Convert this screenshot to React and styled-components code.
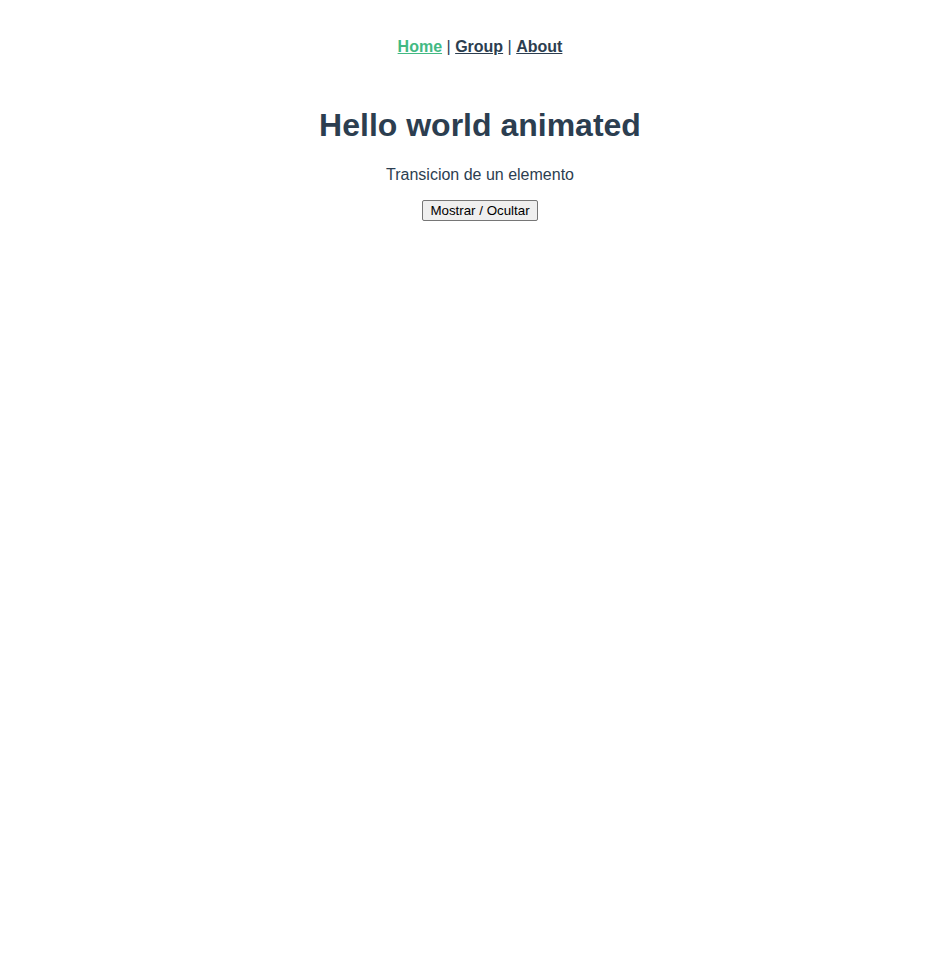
import React from "react";
import styled, { createGlobalStyle } from "styled-components";

const GlobalStyle = createGlobalStyle`
  body {
    margin: 8px;
    background: #fff;
  }
`;

const AppWrap = styled.div`
  width: 944px;
  font-family: "Liberation Sans", Helvetica, Arial, sans-serif;
  -webkit-font-smoothing: antialiased;
  text-align: center;
  color: #2c3e50;
`;

const Nav = styled.div`
  padding: 30px;
  font-size: 16px;
  line-height: normal;
`;

const NavLink = styled.a`
  font-weight: bold;
  color: ${(p) => (p.$active ? "#42b983" : "#2c3e50")};
  text-decoration: underline;
  cursor: pointer;
`;

const Title = styled.h1`
  font-size: 32px;
  margin: 21.44px 0;
`;

const Text = styled.p`
  font-size: 16px;
  margin: 16px 0;
`;

const ToggleButton = styled.button`
  font-family: "Liberation Sans", Arial, sans-serif;
  font-size: 13.33px;
  line-height: 15px;
  color: #000;
  background: #efefef;
  border: 1px solid #767676;
  border-radius: 2px;
  padding: 2px 7px;
  cursor: pointer;
`;

const App = () => {
  const [show, setShow] = React.useState(false);

  return (
    <>
      <GlobalStyle />
      <AppWrap>
        <Nav>
          <NavLink $active href="#/">Home</NavLink> |{" "}
          <NavLink href="#/group">Group</NavLink> |{" "}
          <NavLink href="#/about">About</NavLink>
        </Nav>
        <Title>Hello world animated</Title>
        <Text>Transicion de un elemento</Text>
        <ToggleButton onClick={() => setShow((prev) => !prev)}>
          Mostrar / Ocultar
        </ToggleButton>
        {show && <Text>Hola!</Text>}
      </AppWrap>
    </>
  );
};

export default App;
